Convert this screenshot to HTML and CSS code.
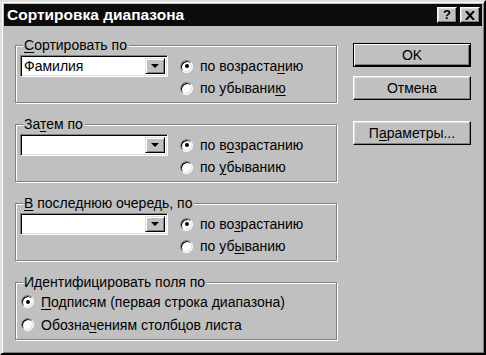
FILE: index.html
```html
<!DOCTYPE html>
<html lang="ru">
<head>
    <meta charset="UTF-8">
    <title>Сортировка диапазона</title>
    <link rel="stylesheet" href="styles.css">
</head>
<body>
    <div class="window">
        <div class="titlebar">
            <span class="title">Сортировка диапазона</span>
            <div class="title-buttons">
                <span class="tbtn help">?</span>
                <span class="tbtn close">
                    <svg width="10" height="9" viewBox="0 0 10 9">
                        <path d="M1 0 L9 9 M9 0 L1 9" stroke="#000" stroke-width="2"/>
                    </svg>
                </span>
            </div>
        </div>

        <div class="client">
            <div class="groups">
                <div class="group">
                    <div class="legend"><u>С</u>ортировать по</div>
                    <div class="group-row">
                        <div class="combo">
                            <span class="combo-text">Фамилия</span>
                            <span class="combo-btn"><i class="arrow"></i></span>
                        </div>
                        <div class="radios">
                            <div class="radio-row"><span class="radio checked"></span><span>по возраста<u>н</u>ию</span></div>
                            <div class="radio-row"><span class="radio"></span><span>по убывани<u>ю</u></span></div>
                        </div>
                    </div>
                </div>

                <div class="group">
                    <div class="legend">За<u>т</u>ем по</div>
                    <div class="group-row">
                        <div class="combo">
                            <span class="combo-text"></span>
                            <span class="combo-btn"><i class="arrow"></i></span>
                        </div>
                        <div class="radios">
                            <div class="radio-row"><span class="radio checked"></span><span>по в<u>о</u>зрастанию</span></div>
                            <div class="radio-row"><span class="radio"></span><span>по <u>у</u>быванию</span></div>
                        </div>
                    </div>
                </div>

                <div class="group">
                    <div class="legend"><u>В</u> последнюю очередь, по</div>
                    <div class="group-row">
                        <div class="combo">
                            <span class="combo-text"></span>
                            <span class="combo-btn"><i class="arrow"></i></span>
                        </div>
                        <div class="radios">
                            <div class="radio-row"><span class="radio checked"></span><span>по во<u>з</u>растанию</span></div>
                            <div class="radio-row"><span class="radio"></span><span>по уб<u>ы</u>ванию</span></div>
                        </div>
                    </div>
                </div>

                <div class="group group-ident">
                    <div class="legend">Идентифицировать поля по</div>
                    <div class="radio-row"><span class="radio checked"></span><span><u>П</u>одписям (первая строка диапазона)</span></div>
                    <div class="radio-row"><span class="radio"></span><span>Обозна<u>ч</u>ениям столбцов листа</span></div>
                </div>
            </div>

            <div class="buttons">
                <div class="btn btn-default">OK</div>
                <div class="btn">Отмена</div>
                <div class="btn btn-params"><span>П<u>а</u>раметры...</span></div>
            </div>
        </div>
    </div>
</body>
</html>
```

FILE: styles.css
```css
body {
    margin: 0;
    background: #c0c0c0;
    font-family: "Liberation Sans", Arial, sans-serif;
    font-size: 14px;
    color: #000;
}

u {
    text-decoration: underline;
    text-underline-offset: 2px;
}

.window {
    box-sizing: border-box;
    width: 486px;
    height: 355px;
    padding: 2px;
    background: #c0c0c0;
    border: 2px solid;
    border-color: #dfdfdf #000 #000 #dfdfdf;
    box-shadow: inset 1px 1px 0 #fff, inset -1px -1px 0 #808080;
}

.titlebar {
    height: 22px;
    background: #0c0c0c;
    display: flex;
    align-items: center;
    justify-content: space-between;
    padding: 0 2px 0 3px;
}

.title {
    color: #fff;
    font-weight: bold;
    font-size: 15.5px;
}

.title-buttons {
    display: flex;
    gap: 3px;
}

.tbtn {
    box-sizing: border-box;
    width: 20px;
    height: 16px;
    background: #c0c0c0;
    border: 1px solid;
    border-color: #fff #000 #000 #fff;
    box-shadow: inset -1px -1px 0 #808080, inset 1px 1px 0 #dfdfdf;
    display: flex;
    align-items: center;
    justify-content: center;
    font-weight: bold;
    font-size: 13px;
    line-height: 14px;
}

.client {
    display: flex;
    gap: 16px;
    padding: 0 11px;
}

.groups {
    width: 322px;
    margin-top: 19px;
}

.group {
    box-sizing: border-box;
    height: 58px;
    padding: 0 4px;
    border: 1px solid #808080;
    box-shadow: inset 1px 1px 0 #fff, 1px 1px 0 #fff;
}

.group + .group {
    margin-top: 21px;
}

.legend {
    width: fit-content;
    margin: -9px 0 0 3px;
    padding: 0 2px 0 1px;
    line-height: 16px;
    background: #c0c0c0;
}

.group-row {
    display: flex;
    margin-top: 2px;
}

.combo {
    box-sizing: border-box;
    width: 148px;
    height: 22px;
    display: flex;
    background: #fff;
    border: 1px solid;
    border-color: #808080 #fff #fff #808080;
    box-shadow: inset 1px 1px 0 #000, inset -1px -1px 0 #dfdfdf;
    padding: 2px;
}

.combo-text {
    flex: 1;
    line-height: 16px;
    padding-left: 1px;
}

.combo-btn {
    box-sizing: border-box;
    width: 20px;
    height: 16px;
    background: #c0c0c0;
    border: 1px solid;
    border-color: #dfdfdf #000 #000 #dfdfdf;
    box-shadow: inset 1px 1px 0 #fff, inset -1px -1px 0 #808080;
    display: flex;
    align-items: center;
    justify-content: center;
}

.arrow {
    width: 0;
    height: 0;
    border-left: 4px solid transparent;
    border-right: 4px solid transparent;
    border-top: 4px solid #000;
}

.radios {
    margin-left: 12px;
}

.radio-row {
    height: 22px;
    display: flex;
    align-items: center;
    gap: 7px;
}

.group-ident .radio-row {
    height: 23px;
    padding-left: 1px;
}

.radio {
    box-sizing: border-box;
    width: 13px;
    height: 13px;
    border-radius: 50%;
    background: #fff;
    border: 1px solid;
    border-color: #808080 #fff #fff #808080;
    box-shadow: inset 1px 1px 0 #000, inset -1px -1px 0 #dfdfdf;
    display: flex;
    align-items: center;
    justify-content: center;
}

.radio.checked::after {
    content: "";
    width: 4px;
    height: 4px;
    border-radius: 50%;
    background: #000;
}

.buttons {
    width: 118px;
    margin-top: 17px;
    display: flex;
    flex-direction: column;
    gap: 9px;
}

.btn {
    box-sizing: border-box;
    height: 24px;
    display: flex;
    align-items: center;
    justify-content: center;
    border: 1px solid;
    border-color: #fff #000 #000 #fff;
    box-shadow: inset -1px -1px 0 #808080, inset 1px 1px 0 #dfdfdf;
}

.btn-default {
    border-color: #000;
    box-shadow: inset 1px 1px 0 #fff, inset -1px -1px 0 #000, inset -2px -2px 0 #808080;
}

.btn-params {
    margin-top: 12px;
}
```
